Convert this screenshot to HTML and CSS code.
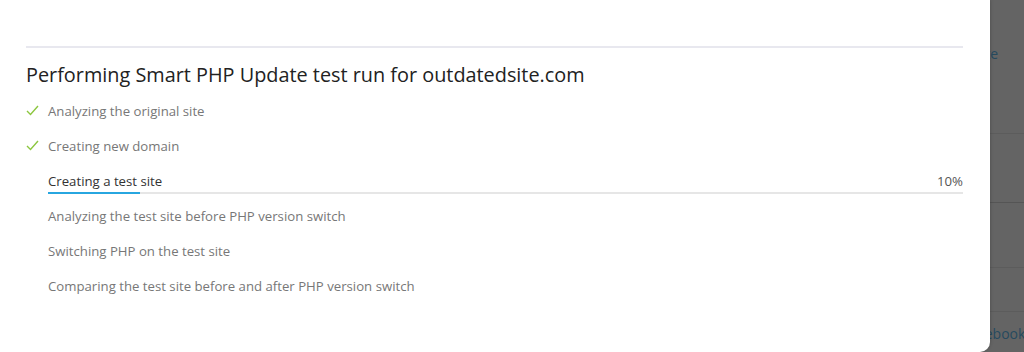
FILE: index.html
```html
<!DOCTYPE html>
<html>
    <head>
        <title>Smart PHP Update</title>
        <link rel="stylesheet" href="styles.css">
    </head>
    <body>
        <div class="page">
            <div class="page-row row-title"><span class="link-end">Smart PHP Update</span></div>
            <div class="page-row row-a"></div>
            <div class="page-row row-b"></div>
            <div class="page-row row-c"></div>
            <div class="page-row row-d"></div>
            <div class="page-row row-share"><span class="link-start">Facebook</span></div>
        </div>

        <div class="modal">
            <div class="modal-rule"></div>
            <p class="modal-title">Performing Smart PHP Update test run for outdatedsite.com</p>

            <ul class="steps">
                <li class="step done">
                    <svg class="check" width="13" height="11" viewBox="0 0 13 11"><path d="M1 6 L4.5 9.5 L12 1" fill="none" stroke="#8cc63f" stroke-width="1.4"/></svg>
                    <span>Analyzing the original site</span>
                </li>
                <li class="step done">
                    <svg class="check" width="13" height="11" viewBox="0 0 13 11"><path d="M1 6 L4.5 9.5 L12 1" fill="none" stroke="#8cc63f" stroke-width="1.4"/></svg>
                    <span>Creating new domain</span>
                </li>
                <li class="step active">
                    <div class="step-head">
                        <span>Creating a test site</span>
                        <span class="percent">10%</span>
                    </div>
                    <div class="progress"><div class="progress-fill" style="width: 10%"></div></div>
                </li>
                <li class="step">
                    <span>Analyzing the test site before PHP version switch</span>
                </li>
                <li class="step">
                    <span>Switching PHP on the test site</span>
                </li>
                <li class="step">
                    <span>Comparing the test site before and after PHP version switch</span>
                </li>
            </ul>
        </div>
    </body>
</html>
```

FILE: styles.css
```css
body{
    margin: 0;
    background-color: #646464;
    font-family: "Open Sans", Arial, sans-serif;
    overflow: hidden;
}
.page{
    height: 352px;
    display: flex;
    flex-direction: column;
}
.page-row{
    border-bottom: 1px solid #5c5c5c;
    font-size: 14px;
    color: #264a5f;
}
.row-title{
    height: 134px;
    text-align: right;
    padding-right: 26px;
    box-sizing: border-box;
    padding-top: 44px;
}
.row-a{
    height: 68px;
    border-bottom-color: #555;
}
.row-b{
    height: 64px;
}
.row-c{
    height: 43px;
}
.row-d{
    height: 0;
    border: none;
}
.row-share{
    border: none;
    padding-left: 963px;
    padding-top: 12px;
    white-space: nowrap;
}
.modal{
    position: absolute;
    top: 0;
    left: 0;
    width: 990px;
    height: 352px;
    background-color: white;
    border-bottom-right-radius: 10px;
    box-shadow: 1px 0 3px rgba(0,0,0,0.15);
    padding: 0 27px 0 26px;
    box-sizing: border-box;
}
.modal-rule{
    margin-top: 46px;
    border-top: 2px solid #e8e8ef;
}
.modal-title{
    margin: 13px 0 0;
    font-size: 19.85px;
    color: #222;
    line-height: 28px;
}
.steps{
    list-style: none;
    margin: 4px 0 0;
    padding: 0;
}
.step{
    display: flex;
    align-items: center;
    height: 35px;
    padding-left: 22px;
    font-size: 13.2px;
    color: #777;
    position: relative;
}
.step.done{
    padding-left: 0;
}
.check{
    width: 13px;
    margin-right: 9px;
}
.step.active{
    flex-direction: column;
    align-items: stretch;
    justify-content: center;
    color: #333;
}
.step-head{
    display: flex;
    justify-content: space-between;
    margin-top: 4px;
}
.percent{
    color: #555;
}
.progress{
    height: 2px;
    background-color: #e6e6e6;
    margin-top: 2px;
}
.progress-fill{
    height: 2px;
    background-color: #27a6e0;
}
```
